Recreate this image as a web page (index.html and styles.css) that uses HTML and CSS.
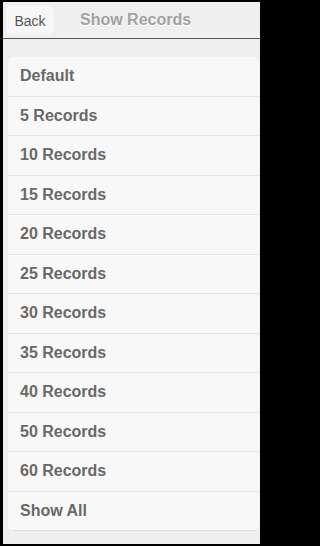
FILE: index.html
```html
<!DOCTYPE html>
<html>
<head>
<meta charset="utf-8">
<link rel="stylesheet" href="styles.css">
</head>
<body>
<div class="screen">
  <header class="bar">
    <button class="back">Back</button>
    <h1 class="title">Show Records</h1>
  </header>
  <main class="content">
    <ul class="list">
      <li class="item">Default</li>
      <li class="item">5 Records</li>
      <li class="item">10 Records</li>
      <li class="item">15 Records</li>
      <li class="item">20 Records</li>
      <li class="item">25 Records</li>
      <li class="item">30 Records</li>
      <li class="item">35 Records</li>
      <li class="item">40 Records</li>
      <li class="item">50 Records</li>
      <li class="item">60 Records</li>
      <li class="item">Show All</li>
    </ul>
  </main>
</div>
</body>
</html>
```
FILE: styles.css
```css
html, body {
  margin: 0;
  padding: 0;
  background: #000;
}
body {
  padding: 2px 3px;
  font-family: "Liberation Sans", Arial, sans-serif;
}
.screen {
  width: 257px;
  height: 542px;
  background: #efefef;
  overflow: hidden;
}
.bar {
  height: 36px;
  border-bottom: 1px solid #4b586a;
  display: flex;
  align-items: center;
  padding: 0 3px;
  box-sizing: content-box;
}
.back {
  width: 48px;
  height: 29px;
  margin-top: 1px;
  border: none;
  border-radius: 5px;
  background: #f6f6f6;
  font-family: "Liberation Sans", Arial, sans-serif;
  font-size: 14px;
  color: #555;
  padding: 0;
}
.title {
  margin: 0 0 0 26px;
  font-size: 16px;
  font-weight: bold;
  color: #a2a2a2;
  text-shadow: 0 1px 0 #fff;
}
.content {
  padding: 18px 1px 0 5px;
}
.list {
  list-style: none;
  margin: 0;
  padding: 0;
  background: #f8f8f8;
  border-radius: 6px;
  overflow: hidden;
}
.item {
  height: 39.5px;
  box-sizing: border-box;
  border-bottom: 1px solid #e4e4e4;
  display: flex;
  align-items: center;
  padding: 0 12px;
  font-size: 16px;
  font-weight: bold;
  color: #686868;
}
.item:last-child {
  border-bottom-color: #dcdcdc;
}
```
